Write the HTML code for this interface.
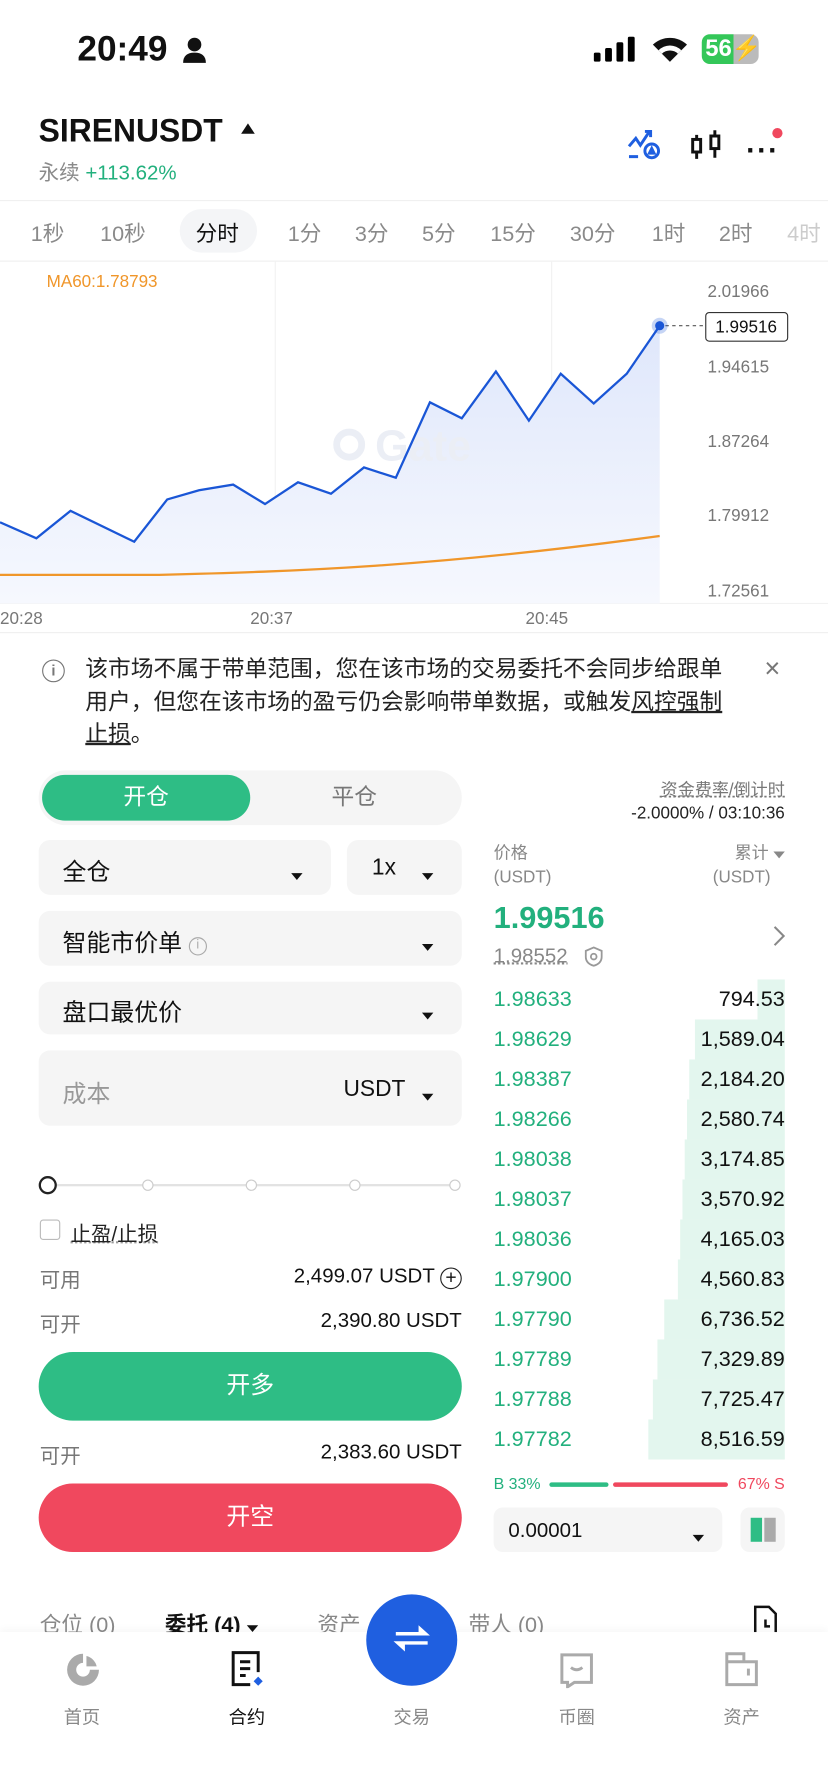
<!DOCTYPE html>
<html><head><meta charset="utf-8"><style>
*{margin:0;padding:0;box-sizing:border-box}
html,body{width:828px;height:1792px;overflow:hidden;background:#fff}
body{font-family:"Liberation Sans","Noto Sans CJK SC",sans-serif;color:#111}
#w{position:absolute;left:0;top:0;width:728px;height:1568px;transform:scale(1.1374,1.1429);transform-origin:0 0}
.a{position:absolute;white-space:nowrap}
.g{color:#22b07d}
.gr{color:#8a8a8a}
.box{position:absolute;background:#f5f5f5;border-radius:10px}
.tri{display:inline-block;width:0;height:0;border-left:5px solid transparent;border-right:5px solid transparent;border-top:6px solid #111}
.row{position:absolute;left:434px;width:256px;height:35px;font-size:19px}
.row .p{position:absolute;left:0;top:7px;color:#22b07d}
.row .v{position:absolute;right:0;top:7px}
</style></head><body><div id="w">
<!-- status -->
<div class="a" style="left:68px;top:25px;font-size:31px;font-weight:bold">20:49</div>
<svg class="a" style="left:160px;top:32px" width="22" height="24"><circle cx="11" cy="7" r="6" fill="#111"/><path d="M1 23 Q1 14 11 14 Q21 14 21 23Z" fill="#111"/></svg>
<svg class="a" style="left:522px;top:32px" width="40" height="22"><rect x="0" y="14" width="6" height="8" rx="1.5"/><rect x="10" y="10" width="6" height="12" rx="1.5"/><rect x="20" y="5" width="6" height="17" rx="1.5"/><rect x="30" y="0" width="6" height="22" rx="1.5"/></svg>
<svg class="a" style="left:572px;top:30px" width="34" height="26"><path d="M17 24 L2 9 A22 22 0 0 1 32 9Z" fill="#111"/><path d="M17 24 L7 14 A14 14 0 0 1 27 14Z" fill="#fff"/><path d="M17 24 L10 17 A10 10 0 0 1 24 17Z" fill="#111"/></svg>
<div class="a" style="left:617px;top:30px;width:50px;height:26px;border-radius:7px;background:linear-gradient(90deg,#34c759 56%,#bbb 56%);color:#fff;font-weight:bold;font-size:21px;padding-left:3px;line-height:26px">56⚡</div>
<!-- header -->
<div class="a" style="left:34px;top:99px;font-size:28px;font-weight:bold">SIRENUSDT</div>
<div class="a" style="left:212px;top:108px;border-left:6px solid transparent;border-right:6px solid transparent;border-bottom:9px solid #111"></div>
<div class="a" style="left:34px;top:137px;font-size:18px"><span class="gr">永续</span> <span class="g">+113.62%</span></div>
<svg class="a" style="left:550px;top:112px" width="32" height="30" fill="none" stroke="#1f5fe0" stroke-width="2.6"><path d="M3 16 L9 9 L13 15 L21 3 M17 3 H22 V8"/><path d="M3 25 H11"/><circle cx="23" cy="20" r="6"/><path d="M21 22 L23 18 L25 22Z" fill="#1f5fe0"/></svg>
<svg class="a" style="left:606px;top:112px" width="30" height="30" fill="none" stroke="#111" stroke-width="2.6"><rect x="3" y="10" width="7" height="11"/><path d="M6.5 6 V10 M6.5 21 V27"/><rect x="19" y="7" width="7" height="11"/><path d="M22.5 2 V7 M22.5 18 V26"/></svg>
<div class="a" style="left:656px;top:116px;font-size:26px;font-weight:bold;letter-spacing:1px">···</div>
<div class="a" style="left:679px;top:112px;width:9px;height:9px;border-radius:50%;background:#f0485e"></div>
<!-- timeframe row -->
<div class="a" style="left:0;top:175px;width:728px;height:54px;border-top:1px solid #f0f0f0;border-bottom:1px solid #f0f0f0"></div>
<div class="a" style="left:158px;top:183px;width:68px;height:38px;border-radius:19px;background:#f4f5f7"></div>
<div class="a" style="top:190px;left:0;font-size:19px;color:#8a8a8a;width:728px">
<span class="a" style="left:27px">1秒</span><span class="a" style="left:88px">10秒</span><span class="a" style="left:172px;color:#111">分时</span><span class="a" style="left:253px">1分</span><span class="a" style="left:312px">3分</span><span class="a" style="left:371px">5分</span><span class="a" style="left:431px">15分</span><span class="a" style="left:501px">30分</span><span class="a" style="left:573px">1时</span><span class="a" style="left:632px">2时</span><span class="a" style="left:692px;color:#ccc">4时</span></div>
<!-- chart -->
<svg class="a" style="left:0;top:228px" width="728" height="326">
<defs><linearGradient id="gf" x1="0" y1="0" x2="0" y2="1"><stop offset="0" stop-color="#dfe7fb"/><stop offset="1" stop-color="#f6f8fe"/></linearGradient></defs>
<line x1="242" y1="0" x2="242" y2="300" stroke="#f2f2f2"/><line x1="485" y1="0" x2="485" y2="300" stroke="#f2f2f2"/>
<line x1="0" y1="300" x2="728" y2="300" stroke="#f2f2f2"/>
<g transform="translate(0,-228)">
<path d="M0 457 L32 471 L62 447 L118 474 L147 437 L175 429 L205 424 L233 441 L262 422 L291 432 L320 409 L348 418 L378 352 L406 366 L436 325 L465 368 L493 327 L522 353 L551 327 L580 285 L580 528 L0 528Z" fill="url(#gf)"/>
<circle cx="307" cy="389" r="11" fill="none" stroke="#ebeef5" stroke-width="6"/>
<text x="372" y="403" font-size="38" font-weight="bold" fill="#ebeef5" text-anchor="middle" font-family="Liberation Sans">Gate</text>
<path d="M0 457 L32 471 L62 447 L118 474 L147 437 L175 429 L205 424 L233 441 L262 422 L291 432 L320 409 L348 418 L378 352 L406 366 L436 325 L465 368 L493 327 L522 353 L551 327 L580 285" fill="none" stroke="#1a56d6" stroke-width="2"/>
<path d="M0 503 L140 503 C260 500 380 496 580 469" fill="none" stroke="#f0962a" stroke-width="2"/>
<line x1="585" y1="285" x2="620" y2="285" stroke="#555" stroke-dasharray="3,3"/>
<circle cx="580" cy="285" r="7" fill="#1a56d6" opacity=".25"/><circle cx="580" cy="285" r="4" fill="#1a56d6"/>
<rect x="620.5" y="273.5" width="72" height="25" rx="3" fill="#fff" stroke="#333"/>
<text x="656" y="291" font-size="15" text-anchor="middle" fill="#111">1.99516</text>
<g font-size="15" fill="#777"><text x="622" y="260">2.01966</text><text x="622" y="326">1.94615</text><text x="622" y="391">1.87264</text><text x="622" y="456">1.79912</text><text x="622" y="522">1.72561</text>
<text x="0" y="546">20:28</text><text x="220" y="546">20:37</text><text x="462" y="546">20:45</text></g>
<text x="41" y="251" font-size="15" fill="#f0962a">MA60:1.78793</text>
</g></svg>
<!-- notice -->
<div class="a" style="left:0;top:553px;width:728px;height:1px;background:#f0f0f0"></div>
<div class="a" style="left:37px;top:577px;width:20px;height:20px;border:1.6px solid #777;border-radius:50%;font-size:13px;text-align:center;line-height:17px;color:#777;font-weight:bold">i</div>
<div class="a" style="left:75px;top:572px;font-size:20px;line-height:28.5px;white-space:normal;width:572px;color:#222">该市场不属于带单范围，您在该市场的交易委托不会同步给跟单用户，但您在该市场的盈亏仍会影响带单数据，或触发<u>风控强制止损</u>。</div>
<div class="a" style="left:672px;top:572px;font-size:24px;color:#777">×</div>
<!-- open/close tabs -->
<div class="box" style="left:34px;top:674px;width:372px;height:48px;border-radius:24px"></div>
<div class="a" style="left:37px;top:678px;width:183px;height:40px;border-radius:20px;background:#2ebd85;color:#fff;font-size:20px;text-align:center;line-height:40px">开仓</div>
<div class="a" style="left:220px;top:678px;width:183px;height:40px;color:#777;font-size:20px;text-align:center;line-height:40px">平仓</div>
<div class="a" style="right:38px;top:680px;font-size:15px;color:#777;text-decoration:underline dotted">资金费率/倒计时</div>
<div class="a" style="right:38px;top:703px;font-size:15px;color:#222">-2.0000% / 03:10:36</div>
<!-- form -->
<div class="box" style="left:34px;top:735px;width:257px;height:48px"></div><div class="a" style="left:55px;top:747px;font-size:21px">全仓</div><div class="a" style="left:256px;top:757px"><span class="tri"></span></div>
<div class="box" style="left:305px;top:735px;width:101px;height:48px"></div><div class="a" style="left:327px;top:748px;font-size:20px">1x</div><div class="a" style="left:371px;top:757px"><span class="tri"></span></div>
<div class="box" style="left:34px;top:797px;width:372px;height:48px"></div><div class="a" style="left:55px;top:809px;font-size:21px">智能市价单 <span style="display:inline-block;width:16px;height:16px;border:1.4px solid #aaa;border-radius:50%;font-size:11px;color:#aaa;text-align:center;line-height:13px;vertical-align:2px">i</span></div><div class="a" style="left:371px;top:819px"><span class="tri"></span></div>
<div class="box" style="left:34px;top:859px;width:372px;height:46px"></div><div class="a" style="left:55px;top:870px;font-size:21px">盘口最优价</div><div class="a" style="left:371px;top:879px"><span class="tri"></span></div>
<div class="box" style="left:34px;top:919px;width:372px;height:66px"></div><div class="a" style="left:55px;top:941px;font-size:21px;color:#999">成本</div><div class="a" style="left:302px;top:942px;font-size:20px">USDT</div><div class="a" style="left:371px;top:950px"><span class="tri"></span></div>
<!-- slider -->
<div class="a" style="left:42px;top:1036px;width:358px;height:2px;background:#e2e2e2"></div>
<div class="a" style="left:34px;top:1029px;width:16px;height:16px;border:2px solid #222;border-radius:50%;background:#fff"></div>
<div class="a" style="left:125px;top:1032px;width:10px;height:10px;border:1.5px solid #ccc;border-radius:50%;background:#fff"></div>
<div class="a" style="left:216px;top:1032px;width:10px;height:10px;border:1.5px solid #ccc;border-radius:50%;background:#fff"></div>
<div class="a" style="left:307px;top:1032px;width:10px;height:10px;border:1.5px solid #ccc;border-radius:50%;background:#fff"></div>
<div class="a" style="left:395px;top:1032px;width:10px;height:10px;border:1.5px solid #ccc;border-radius:50%;background:#fff"></div>
<div class="a" style="left:35px;top:1067px;width:18px;height:18px;border:1.5px solid #bbb;border-radius:3px"></div>
<div class="a" style="left:62px;top:1066px;font-size:18px;color:#222;text-decoration:underline dotted #999">止盈/止损</div>
<div class="a" style="left:35px;top:1106px;font-size:18px;color:#777">可用</div>
<div class="a" style="right:322px;top:1106px;font-size:18px">2,499.07 USDT <span style="display:inline-block;width:19px;height:19px;border:1.6px solid #222;border-radius:50%;text-align:center;line-height:15px;font-size:17px;vertical-align:-1px">+</span></div>
<div class="a" style="left:35px;top:1145px;font-size:18px;color:#777">可开</div>
<div class="a" style="right:322px;top:1145px;font-size:18px">2,390.80 USDT</div>
<div class="a" style="left:34px;top:1183px;width:372px;height:60px;border-radius:30px;background:#2ebd85;color:#fff;font-size:21px;text-align:center;line-height:60px">开多</div>
<div class="a" style="left:35px;top:1260px;font-size:18px;color:#777">可开</div>
<div class="a" style="right:322px;top:1260px;font-size:18px">2,383.60 USDT</div>
<div class="a" style="left:34px;top:1298px;width:372px;height:60px;border-radius:30px;background:#f0485e;color:#fff;font-size:21px;text-align:center;line-height:60px">开空</div>
<!-- order book -->
<div class="a" style="left:434px;top:736px;font-size:15px;color:#888;line-height:21px">价格<br>(USDT)</div>
<div class="a" style="right:38px;top:736px;font-size:15px;color:#888;line-height:21px;text-align:right">累计 <span class="tri" style="border-top-color:#888"></span><br>(USDT)&nbsp;&nbsp;&nbsp;</div>
<div class="a" style="left:434px;top:788px;font-size:27px;font-weight:bold;color:#22b07d">1.99516</div>
<div class="a" style="left:434px;top:826px;font-size:18px;color:#888;text-decoration:underline dotted">1.98552</div>
<svg class="a" style="left:514px;top:828px" width="16" height="18" fill="none" stroke="#999" stroke-width="1.6"><path d="M8 1 L15 4 V9 Q15 15 8 17 Q1 15 1 9 V4Z"/><circle cx="8" cy="9" r="2.5"/></svg>
<svg class="a" style="left:679px;top:809px" width="12" height="20" fill="none" stroke="#888" stroke-width="1.8"><path d="M2 2 L10 10 L2 18"/></svg>
<div class="a" style="left:666px;top:857px;width:24px;height:35px;background:#e3f6ee"></div>
<div class="a" style="left:611px;top:892px;width:79px;height:35px;background:#e3f6ee"></div>
<div class="a" style="left:606px;top:927px;width:84px;height:35px;background:#e3f6ee"></div>
<div class="a" style="left:604px;top:962px;width:86px;height:35px;background:#e3f6ee"></div>
<div class="a" style="left:602px;top:997px;width:88px;height:35px;background:#e3f6ee"></div>
<div class="a" style="left:600px;top:1032px;width:90px;height:35px;background:#e3f6ee"></div>
<div class="a" style="left:598px;top:1067px;width:92px;height:35px;background:#e3f6ee"></div>
<div class="a" style="left:596px;top:1102px;width:94px;height:35px;background:#e3f6ee"></div>
<div class="a" style="left:584px;top:1137px;width:106px;height:35px;background:#e3f6ee"></div>
<div class="a" style="left:578px;top:1172px;width:112px;height:35px;background:#e3f6ee"></div>
<div class="a" style="left:574px;top:1207px;width:116px;height:35px;background:#e3f6ee"></div>
<div class="a" style="left:570px;top:1242px;width:120px;height:35px;background:#e3f6ee"></div>
<div class="row" style="top:857px"><span class="p">1.98633</span><span class="v">794.53</span></div>
<div class="row" style="top:892px"><span class="p">1.98629</span><span class="v">1,589.04</span></div>
<div class="row" style="top:927px"><span class="p">1.98387</span><span class="v">2,184.20</span></div>
<div class="row" style="top:962px"><span class="p">1.98266</span><span class="v">2,580.74</span></div>
<div class="row" style="top:997px"><span class="p">1.98038</span><span class="v">3,174.85</span></div>
<div class="row" style="top:1032px"><span class="p">1.98037</span><span class="v">3,570.92</span></div>
<div class="row" style="top:1067px"><span class="p">1.98036</span><span class="v">4,165.03</span></div>
<div class="row" style="top:1102px"><span class="p">1.97900</span><span class="v">4,560.83</span></div>
<div class="row" style="top:1137px"><span class="p">1.97790</span><span class="v">6,736.52</span></div>
<div class="row" style="top:1172px"><span class="p">1.97789</span><span class="v">7,329.89</span></div>
<div class="row" style="top:1207px"><span class="p">1.97788</span><span class="v">7,725.47</span></div>
<div class="row" style="top:1242px"><span class="p">1.97782</span><span class="v">8,516.59</span></div>
<div class="a" style="left:434px;top:1290px;font-size:14px;color:#22b07d">B 33%</div>
<div class="a" style="left:483px;top:1297px;width:52px;height:4px;background:#2ebd85;border-radius:2px"></div>
<div class="a" style="left:539px;top:1297px;width:101px;height:4px;background:#f0485e;border-radius:2px"></div>
<div class="a" style="right:38px;top:1290px;font-size:14px;color:#f0485e">67% S</div>
<div class="box" style="left:434px;top:1319px;width:201px;height:39px;border-radius:8px"></div>
<div class="a" style="left:447px;top:1329px;font-size:18px">0.00001</div><div class="a" style="left:609px;top:1336px"><span class="tri"></span></div>
<div class="box" style="left:651px;top:1319px;width:39px;height:39px;border-radius:8px"></div>
<div class="a" style="left:660px;top:1328px;width:10px;height:21px;background:#2ebd85"></div><div class="a" style="left:672px;top:1328px;width:10px;height:21px;background:#aaa"></div>
<!-- bottom tabs -->
<div class="a" style="left:35px;top:1407px;font-size:19px;color:#888">仓位 (0)</div>
<div class="a" style="left:145px;top:1407px;font-size:19px;font-weight:bold">委托 (4) <span class="tri"></span></div>
<div class="a" style="left:279px;top:1407px;font-size:19px;color:#888">资产</div>
<div class="a" style="left:412px;top:1407px;font-size:19px;color:#888">带人 (0)</div>
<svg class="a" style="left:662px;top:1404px" width="24" height="26" fill="none" stroke="#111" stroke-width="2.2"><path d="M2 26 V2 H14 L20 8 V26"/><path d="M11 13 V19 H15"/></svg>
<!-- nav -->
<div class="a" style="left:0;top:1428px;width:728px;height:140px;background:#fff;box-shadow:0 -3px 6px rgba(0,0,0,.03)"></div>
<svg class="a" style="left:57px;top:1445px" width="32" height="32"><path d="M16 2 A14 14 0 1 0 30 16 H16Z" fill="#aaa"/><circle cx="16" cy="16" r="6" fill="#fff"/><rect x="18" y="2" width="12" height="12" fill="#fff"/><path d="M19 4 A12 12 0 0 1 28 13 H19Z" fill="#aaa"/></svg>
<svg class="a" style="left:202px;top:1443px" width="32" height="34" fill="none" stroke="#111" stroke-width="2.6"><path d="M25 20 V3 H3 V31 H18"/><path d="M9 11 H18 M9 17 H18 M9 23 H14"/><path d="M25 24 L29 28 L25 32 L21 28Z" fill="#1f5fe0" stroke="none"/></svg>
<div class="a" style="left:322px;top:1395px;width:80px;height:80px;border-radius:50%;background:#1f5fe0"></div>
<svg class="a" style="left:344px;top:1418px" width="36" height="34" fill="#fff"><path d="M4 10 H24 V4 L34 13 H4Z"/><path d="M32 21 H12 V27 L2 18 H32Z"/></svg>
<svg class="a" style="left:491px;top:1445px" width="32" height="32" fill="none" stroke="#aaa" stroke-width="2.6"><path d="M3 3 H29 V27 H14 L8 31 V27 H3Z"/><path d="M11 14 Q16 18 21 14"/></svg>
<svg class="a" style="left:636px;top:1444px" width="32" height="32" fill="none" stroke="#aaa" stroke-width="2.6"><path d="M3 8 V30 H29 V10 H3"/><path d="M3 8 V3 H18 V10"/><path d="M22 16 V22"/></svg>
<div class="a" style="left:56px;top:1489px;font-size:16px;color:#888">首页</div>
<div class="a" style="left:201px;top:1489px;font-size:16px;color:#111">合约</div>
<div class="a" style="left:346px;top:1489px;font-size:16px;color:#888">交易</div>
<div class="a" style="left:491px;top:1489px;font-size:16px;color:#888">币圈</div>
<div class="a" style="left:636px;top:1489px;font-size:16px;color:#888">资产</div>
</div></body></html>
